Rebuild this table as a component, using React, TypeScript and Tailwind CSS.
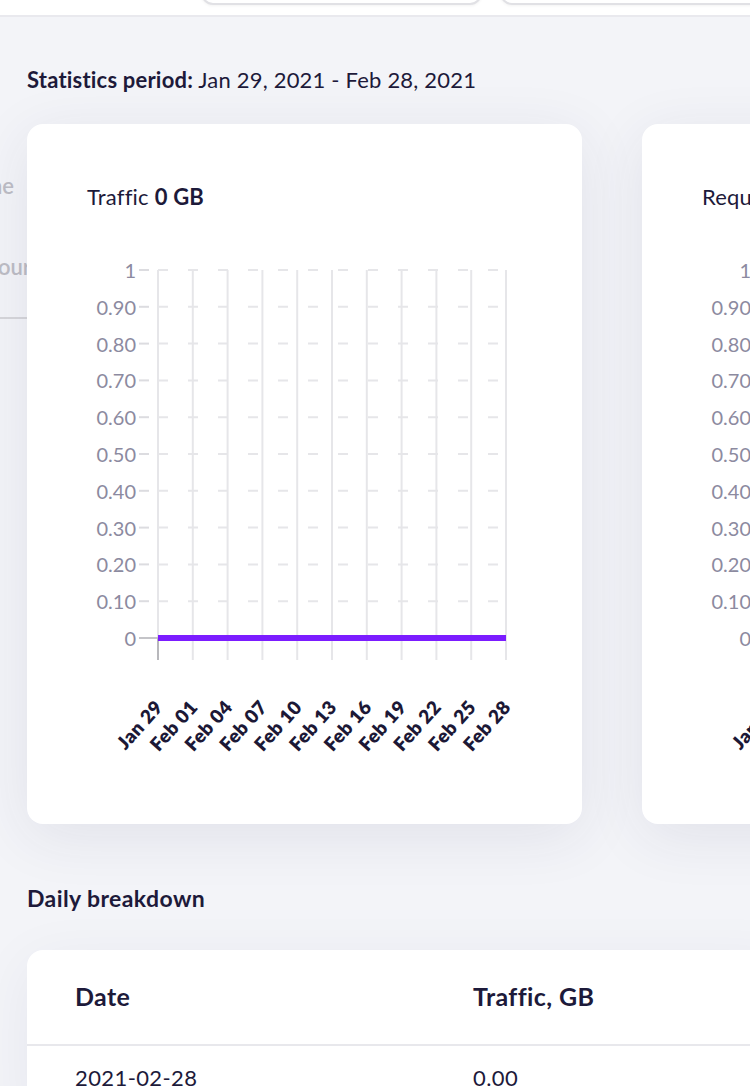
import React from 'react';

const FONT = "font-['Lato','Noto_Sans',sans-serif]";

const Y_TICKS = ['1', '0.90', '0.80', '0.70', '0.60', '0.50', '0.40', '0.30', '0.20', '0.10', '0'];
const X_TICKS = ['Jan 29', 'Feb 01', 'Feb 04', 'Feb 07', 'Feb 10', 'Feb 13', 'Feb 16', 'Feb 19', 'Feb 22', 'Feb 25', 'Feb 28'];

// chart geometry, in svg coords
const X0 = 131;
const X_STEP = 34.8;
const Y0 = 30;
const Y_STEP = 36.8;
const Y_ZERO = Y0 + Y_STEP * 10;

function LineChart() {
  return (
    <svg width="555" height="560" viewBox="0 0 555 560" className="block">
      {/* vertical grid */}
      {X_TICKS.map((_, i) => {
        const x = X0 + i * X_STEP;
        return <line key={i} x1={x} x2={x} y1={Y0} y2={Y_ZERO + 22} stroke="#e6e6e9" strokeWidth="2" />;
      })}
      {/* horizontal dashed grid + y ticks */}
      {Y_TICKS.map((label, i) => {
        const y = Y0 + i * Y_STEP;
        const isZero = i === Y_TICKS.length - 1;
        return (
          <g key={label}>
            {!isZero && (
              <line x1={X0} x2={X0 + X_STEP * 10} y1={y} y2={y} stroke="#e6e6e9" strokeWidth="2" strokeDasharray="10 20" />
            )}
            <line x1={112} x2={isZero ? X0 : 122} y1={y} y2={y} stroke={isZero ? '#c4c4c8' : '#dcdce0'} strokeWidth="2" />
            <text x={109} y={y} textAnchor="end" dominantBaseline="central" fontSize="20" fill="#8c8aa0"
              fontFamily="Lato, 'Noto Sans', sans-serif">
              {label}
            </text>
          </g>
        );
      })}
      {/* axis foot */}
      <line x1={X0} x2={X0} y1={Y_ZERO} y2={Y_ZERO + 22} stroke="#b8b8bc" strokeWidth="2" />
      {/* data */}
      <line x1={X0} x2={X0 + X_STEP * 10} y1={Y_ZERO} y2={Y_ZERO} stroke="#7b1cff" strokeWidth="6" />
      {/* x labels */}
      {X_TICKS.map((label, i) => {
        const x = X0 + i * X_STEP + 6;
        const y = 468;
        return (
          <text key={label} x={x} y={y} textAnchor="end" fontSize="19" fontWeight="800" fill="#1c1836"
            letterSpacing="0.4" fontFamily="Lato, 'Noto Sans', sans-serif" transform={`rotate(-48 ${x} ${y})`}>
            {label}
          </text>
        );
      })}
    </svg>
  );
}

function ChartCard({ title, value }: { title: string; value: string }) {
  return (
    <div className="relative z-10 w-[555px] h-[700px] shrink-0 rounded-2xl bg-white shadow-[0_12px_60px_rgba(40,40,90,0.09)]">
      <div className="pl-[60px] pt-[56px] h-[116px] text-[22px] tracking-[0.2px] text-[#1d1a3a]">
        {title} <span className="font-bold">{value}</span>
      </div>
      <LineChart />
    </div>
  );
}

export default function App() {
  return (
    <div className={`${FONT} w-[750px] h-[1086px] overflow-hidden bg-[#f3f4f8] relative`}>
      {/* top bar */}
      <div className="h-[17px] bg-white border-b-2 border-[#e9e9ee] flex gap-[18px] pl-[201px] overflow-hidden">
        <div className="w-[281px] h-[40px] -mt-[35px] shrink-0 rounded-xl border-2 border-[#e1e1e5] bg-white shadow-[0_1px_3px_rgba(0,0,0,0.05)]" />
        <div className="w-[300px] h-[40px] -mt-[35px] shrink-0 rounded-xl border-2 border-[#e1e1e5] bg-white shadow-[0_1px_3px_rgba(0,0,0,0.05)]" />
      </div>

      {/* something sitting behind the charts */}
      <div className="absolute left-0 top-[160px] w-[60px] h-[170px] text-[22px] font-semibold text-[#bdbdc5]">
        <div className="absolute right-[46px] top-[9px] whitespace-nowrap">Zone</div>
        <div className="absolute right-[29px] top-[90px] whitespace-nowrap">Hour</div>
        <div className="absolute left-0 right-0 top-[157px] h-[2px] bg-[#d6d6da]" />
      </div>

      <div className="pl-[27px]">
        <div className="pt-[46px] h-[107px] text-[22px] tracking-[0.2px] text-[#1d1a3a]">
          <span className="font-bold">Statistics period:</span> Jan 29, 2021 - Feb 28, 2021
        </div>

        <div className="flex gap-[60px]">
          <ChartCard title="Traffic" value="0 GB" />
          <ChartCard title="Requests" value="0" />
        </div>

        <div className="pt-[57px] h-[126px] text-[23px] tracking-[0.4px] font-bold text-[#1d1a3a]">Daily breakdown</div>

        <div className="w-[760px] rounded-tl-2xl bg-white shadow-[0_12px_60px_rgba(40,40,90,0.06)]">
          <div className="grid grid-cols-[398px_1fr] pl-[48px] h-[96px] items-center border-b-2 border-[#e8e8ec] text-[25px] tracking-[0.4px] font-bold text-[#1d1a3a]">
            <div>Date</div>
            <div>Traffic, GB</div>
          </div>
          <div className="grid grid-cols-[398px_1fr] pl-[48px] pt-[15px] h-[70px] text-[22px] tracking-[0.4px] text-[#1d1a3a]">
            <div>2021-02-28</div>
            <div>0.00</div>
          </div>
        </div>
      </div>
    </div>
  );
}
